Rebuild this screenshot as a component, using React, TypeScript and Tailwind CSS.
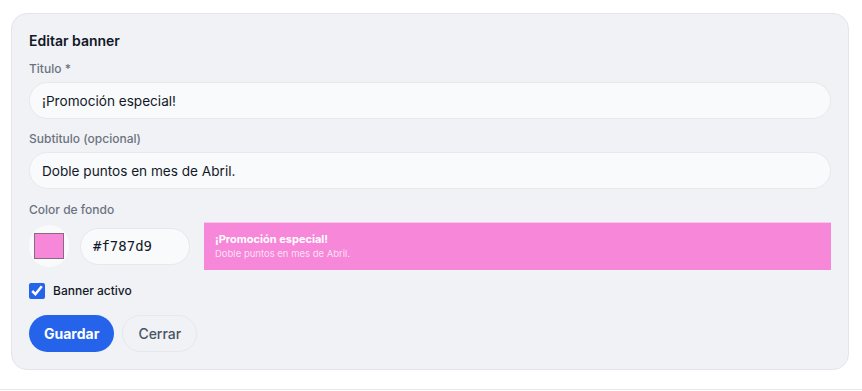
import { useState } from 'react';

export default function App() {
  const [title, setTitle] = useState('¡Promoción especial!');
  const [subtitle, setSubtitle] = useState('Doble puntos en mes de Abril.');
  const [color, setColor] = useState('#f787d9');
  const [active, setActive] = useState(true);

  return (
    <div className="min-h-[391px] bg-white font-['Inter',sans-serif] text-gray-900">
      <div className="pl-[11px] pr-[13px] pt-[13px]">
        <div className="rounded-2xl border border-[#e3e5ea] bg-[#f1f2f6] pb-[17px] pl-[17px] pr-[17px] pt-[18px]">
          <h2 className="text-[14px] font-semibold leading-[18px] text-[#111827]">Editar banner</h2>

          <label className="mt-[11px] block text-[12px] font-medium leading-4 text-[#6b7280]">Titulo *</label>
          <input
            value={title}
            onChange={(e) => setTitle(e.target.value)}
            className="mt-[5px] block h-[37px] w-full rounded-full border border-[#e6e8ec] bg-[#f9fafb] px-[12px] text-[13.6px] text-[#111827] outline-none"
          />

          <label className="mt-[12px] block text-[12px] font-medium leading-4 text-[#6b7280]">Subtitulo (opcional)</label>
          <input
            value={subtitle}
            onChange={(e) => setSubtitle(e.target.value)}
            className="mt-[5px] block h-[37px] w-full rounded-full border border-[#e6e8ec] bg-[#f9fafb] px-[12px] text-[13.6px] text-[#111827] outline-none"
          />

          <label className="mt-[13px] block text-[12px] font-medium leading-4 text-[#6b7280]">Color de fondo</label>
          <div className="mt-[4px] flex items-center">
            <div className="flex h-[42px] w-[40px] items-center justify-center rounded-full bg-[#f9fafb]">
              <div className="h-[26px] w-[30px] border border-[#8a6a80]" style={{ backgroundColor: color }} />
            </div>
            <input
              value={color}
              onChange={(e) => setColor(e.target.value)}
              className="ml-[11px] h-[37px] w-[110px] rounded-full border border-[#e6e8ec] bg-[#f9fafb] px-[12px] font-['DejaVu_Sans_Mono',monospace] text-[14px] text-[#111827] outline-none"
            />
            <div className="ml-[14px] flex h-[48px] flex-1 flex-col justify-center border-t border-[#f9c6eb] px-[11px]" style={{ backgroundColor: color }}>
              <div className="text-[11px] font-bold leading-[15px] text-white">{title}</div>
              <div className="text-[9.5px] leading-[14px] text-white/75">{subtitle}</div>
            </div>
          </div>

          <label className="mt-[11px] flex h-[20px] items-center gap-[8px] text-[12px] font-medium text-[#111827]">
            <input
              type="checkbox"
              checked={active}
              onChange={(e) => setActive(e.target.checked)}
              className="h-4 w-4 accent-[#2563eb]"
            />
            Banner activo
          </label>

          <div className="mt-[14px] flex gap-[8px]">
            <button className="h-[37px] rounded-full bg-[#2563eb] px-[15px] text-[14px] font-bold text-white">Guardar</button>
            <button className="h-[37px] rounded-full border border-[#e6e8ec] bg-[#f1f2f6] px-[15px] text-[14px] font-medium text-[#4b5563]">Cerrar</button>
          </div>
        </div>
      </div>
      <div className="mt-[19px] h-px bg-[#e5e7eb]" />
    </div>
  );
}
